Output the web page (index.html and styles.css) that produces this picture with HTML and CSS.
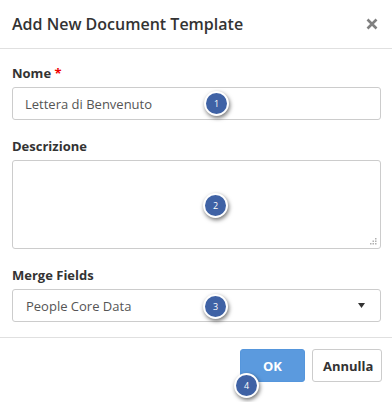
FILE: index.html
```html
<!DOCTYPE html>
<html lang="it">
<head>
    <meta charset="UTF-8">
    <meta name="viewport" content="width=device-width, initial-scale=1.0">
    <title>Add New Document Template</title>
    <link rel="stylesheet" href="styles.css">
</head>
<body>
    <div class="modal">
        <div class="modal-header">
            <h4 class="modal-title">Add New Document Template</h4>
            <button class="close" type="button" aria-label="Close">
                <svg width="12" height="12" viewBox="0 0 12 12">
                    <path d="M1.5 1.5 L10.5 10.5 M10.5 1.5 L1.5 10.5" stroke="#808080" stroke-width="2.6" stroke-linecap="butt"/>
                </svg>
            </button>
        </div>
        <div class="modal-body">
            <div class="form-group">
                <label for="nome">Nome <span class="required">*</span></label>
                <input type="text" id="nome" class="form-control" value="Lettera di Benvenuto">
            </div>
            <div class="form-group">
                <label for="descrizione">Descrizione</label>
                <div class="textarea-wrap">
                    <textarea id="descrizione" class="form-control"></textarea>
                    <svg class="grip" width="7" height="7" viewBox="0 0 7 7">
                        <rect x="5" y="0" width="1.5" height="1.5" fill="#b0b0b0"/>
                        <rect x="2.5" y="2.5" width="1.5" height="1.5" fill="#b0b0b0"/>
                        <rect x="5" y="2.5" width="1.5" height="1.5" fill="#b0b0b0"/>
                        <rect x="0" y="5" width="1.5" height="1.5" fill="#b0b0b0"/>
                        <rect x="2.5" y="5" width="1.5" height="1.5" fill="#b0b0b0"/>
                        <rect x="5" y="5" width="1.5" height="1.5" fill="#b0b0b0"/>
                    </svg>
                </div>
            </div>
            <div class="form-group">
                <label for="merge">Merge Fields</label>
                <div class="select">
                    <span>People Core Data</span>
                    <svg width="7" height="5" viewBox="0 0 7 5"><path d="M0 0 H7 L3.5 5 Z" fill="#333"/></svg>
                </div>
            </div>
        </div>
        <div class="modal-footer">
            <button class="btn btn-primary" type="button">OK</button>
            <button class="btn btn-default" type="button">Annulla</button>
        </div>

        <span class="step" style="left: 204px; top: 91px;">1</span>
        <span class="step" style="left: 203px; top: 193px;">2</span>
        <span class="step" style="left: 203px; top: 294px;">3</span>
        <span class="step" style="left: 234px; top: 373px;">4</span>
    </div>
</body>
</html>
```

FILE: styles.css
```css
html, body {
    margin: 0;
    padding: 0;
    background-color: #fff;
}

body {
    font-family: "Open Sans", "Liberation Sans", sans-serif;
    color: #333;
}

.modal {
    position: relative;
    width: 392px;
    height: 402px;
    overflow: hidden;
}

.modal-header {
    display: flex;
    align-items: center;
    justify-content: space-between;
    height: 49px;
    padding: 0 14px 0 12px;
    border-bottom: 1px solid #e0e0e0;
    box-sizing: border-box;
}

.modal-title {
    margin: 0 0 1px;
    font-size: 16px;
    font-weight: 600;
    color: #333;
}

.close {
    display: flex;
    padding: 0;
    margin-top: -1px;
    border: 0;
    background: none;
}

.modal-body {
    padding: 15px 11px 15px 12px;
}

.form-group {
    margin-bottom: 17px;
}

.form-group:last-child {
    margin-bottom: 0;
}

.form-group label {
    display: block;
    margin-bottom: 5px;
    font-size: 13px;
    line-height: 18px;
    font-weight: 700;
    color: #333;
}

.required {
    color: #e00;
}

.form-control {
    display: block;
    width: 100%;
    height: 33px;
    padding: 0 12px;
    font-family: inherit;
    font-size: 13px;
    color: #555;
    border: 1px solid #ccc;
    border-radius: 3px;
    box-sizing: border-box;
    background-color: #fff;
}

.textarea-wrap {
    position: relative;
}

textarea.form-control {
    height: 89px;
    resize: none;
}

.grip {
    position: absolute;
    right: 4px;
    bottom: 4px;
}

.select {
    display: flex;
    align-items: center;
    justify-content: space-between;
    height: 33px;
    padding: 0 15px 0 13px;
    font-size: 13px;
    color: #555;
    border: 1px solid #ccc;
    border-radius: 3px;
    box-sizing: border-box;
}

.modal-footer {
    display: flex;
    justify-content: flex-end;
    gap: 7px;
    padding: 11px 10px 0 12px;
    border-top: 1px solid #e0e0e0;
}

.btn {
    height: 33px;
    padding: 0 10px;
    font-family: inherit;
    font-size: 13px;
    font-weight: 700;
    border-radius: 3px;
    box-sizing: border-box;
}

.btn-primary {
    width: 65px;
    color: #fff;
    background-color: #5b9ade;
    border: 1px solid #5596dc;
}

.btn-default {
    width: 70px;
    color: #333;
    background-color: #fff;
    border: 1px solid #ccc;
}

.step {
    position: absolute;
    display: flex;
    align-items: center;
    justify-content: center;
    width: 21px;
    height: 21px;
    font-size: 9px;
    color: #fff;
    background-color: #3f62a5;
    border: 2px solid #fff;
    border-radius: 50%;
    box-shadow: 1px 2px 4px rgba(0, 0, 0, 0.55);
}
```
